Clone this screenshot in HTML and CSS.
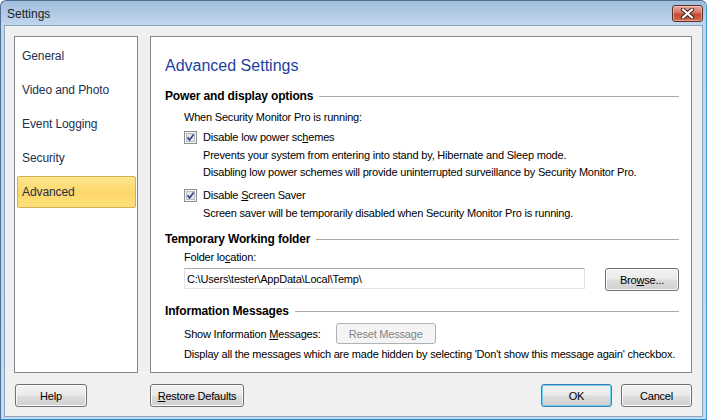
FILE: index.html
```html
<!DOCTYPE html>
<html lang="en">
<head>
<meta charset="UTF-8" />
<meta name="viewport" content="width=device-width, initial-scale=1" />
<title>Settings</title>
<link rel="stylesheet" href="styles.css">
</head>
<body>

<div class="window">
  <div class="titlebar">
    <span class="title">Settings</span>
    <button class="close" aria-label="Close">
      <svg width="15" height="11" viewBox="0 0 15 11">
        <path d="M3 1.5 L12 9.5 M12 1.5 L3 9.5" stroke="#4a2420" stroke-width="4.2" stroke-linecap="round" fill="none"/>
        <path d="M3 1.5 L12 9.5 M12 1.5 L3 9.5" stroke="#ffffff" stroke-width="2.2" stroke-linecap="round" fill="none"/>
      </svg>
    </button>
  </div>

  <div class="client">
    <div class="main">
      <ul class="nav">
        <li>General</li>
        <li>Video and Photo</li>
        <li>Event Logging</li>
        <li>Security</li>
        <li class="active">Advanced</li>
      </ul>

      <section class="panel">
        <h1>Advanced Settings</h1>

        <div class="group-title"><span>Power and display options</span></div>
        <div class="indent">
          <p class="line first">When Security Monitor Pro is running:</p>
          <label class="check">
            <svg width="13" height="13" viewBox="0 0 13 13">
              <rect x="0.5" y="0.5" width="12" height="12" fill="#f6f6f6" stroke="#8e8f8f"/>
              <rect x="2.5" y="2.5" width="8" height="8" fill="#e4e6ea" stroke="#b9bcc2"/>
              <path d="M3.6 6.4 L5.6 8.9 L9.6 3.4" stroke="#32488a" stroke-width="1.7" fill="none"/>
            </svg>
            <span>Disable low power sc<u>h</u>emes</span>
          </label>
          <div class="sub">
            <p class="line">Prevents your system from entering into stand by, Hibernate and Sleep mode.</p>
            <p class="line">Disabling low power schemes will provide uninterrupted surveillance by Security Monitor Pro.</p>
          </div>
          <label class="check second">
            <svg width="13" height="13" viewBox="0 0 13 13">
              <rect x="0.5" y="0.5" width="12" height="12" fill="#f6f6f6" stroke="#8e8f8f"/>
              <rect x="2.5" y="2.5" width="8" height="8" fill="#e4e6ea" stroke="#b9bcc2"/>
              <path d="M3.6 6.4 L5.6 8.9 L9.6 3.4" stroke="#32488a" stroke-width="1.7" fill="none"/>
            </svg>
            <span>Disable <u>S</u>creen Saver</span>
          </label>
          <div class="sub">
            <p class="line">Screen saver will be temporarily disabled when Security Monitor Pro is running.</p>
          </div>
        </div>

        <div class="group-title tight"><span>Temporary Working folder</span></div>
        <div class="indent">
          <p class="line small-gap">Folder lo<u>c</u>ation:</p>
          <div class="path-row">
            <input class="path" type="text" value="C:\Users\tester\AppData\Local\Temp\" readonly>
            <button class="btn browse">Bro<u>w</u>se...</button>
          </div>
        </div>

        <div class="group-title"><span>Information Messages</span></div>
        <div class="indent">
          <div class="show-row">
            <span>Show Information <u>M</u>essages:</span>
            <button class="btn disabled">Reset Message</button>
          </div>
          <p class="line small-gap">Display all the messages which are made hidden by selecting 'Don't show this message again' checkbox.</p>
        </div>
      </section>
    </div>

    <div class="footer">
      <div class="footer-left">
        <button class="btn help">Help</button>
      </div>
      <div class="footer-right">
        <button class="btn restore"><u>R</u>estore Defaults</button>
        <button class="btn ok">OK</button>
        <button class="btn cancel">Cancel</button>
      </div>
    </div>
  </div>
</div>

</body>
</html>
```

FILE: styles.css
```css
body {
  margin: 0;
  padding: 0;
  font-family: 'Liberation Sans', Arial, sans-serif;
  font-size: 11px;
  background: #ffffff;
}
.window {
  width: 707px;
  height: 420px;
  box-sizing: border-box;
  border: 1px solid #4f6f93;
  border-right-color: #3c9fd6;
  border-bottom-color: #2e8fc8;
  border-radius: 6px 6px 0 0;
  background: linear-gradient(#a2bedd, #c1d6ed 24px, #c4d9ef);
  padding: 0 3px 2px 3px;
  display: flex;
  flex-direction: column;
}
.titlebar {
  height: 24px;
  display: flex;
  align-items: flex-start;
}
.title {
  font-size: 12px;
  color: #1b1b1b;
  padding: 6px 0 0 3px;
}
.close {
  margin-left: auto;
  margin-top: 4px;
  width: 31px;
  height: 17px;
  padding: 0;
  border: 1px solid #5b2f2f;
  border-radius: 3px;
  background: linear-gradient(#e9a99b, #d47462 45%, #c04a33 55%, #d16b4e);
  box-shadow: inset 0 0 0 1px rgba(255, 220, 210, 0.5);
  display: flex;
  align-items: center;
  justify-content: center;
}
.client {
  flex: 1;
  background: #f0f0f0;
  border: 1px solid #8ca4c0;
  padding: 10px 10px 8px 9px;
  display: flex;
  flex-direction: column;
}
.main {
  display: flex;
  gap: 12px;
  height: 337px;
}
.nav {
  width: 124px;
  box-sizing: border-box;
  margin: 0;
  padding: 3px 1px 0 2px;
  list-style: none;
  background: #ffffff;
  border: 1px solid #828790;
}
.nav li {
  height: 32px;
  box-sizing: border-box;
  line-height: 30px;
  padding-left: 4px;
  margin-bottom: 2px;
  border: 1px solid transparent;
  border-radius: 2px;
  color: #1e3050;
  font-size: 12px;
  letter-spacing: -0.1px;
}
.nav li.active {
  background: linear-gradient(#fde58c, #fdd869 55%, #fde07c);
  border-color: #d5b04f;
}
.panel {
  flex: 1;
  box-sizing: border-box;
  background: #ffffff;
  border: 1px solid #828790;
  padding: 19px 12px 0 14px;
}
h1 {
  margin: 0;
  font-size: 16px;
  font-weight: normal;
  line-height: 20px;
  color: #1d3f9f;
}
.group-title {
  display: flex;
  align-items: center;
  margin-top: 12px;
  height: 16px;
  font-size: 12px;
  font-weight: bold;
  letter-spacing: -0.15px;
  color: #000000;
}
.group-title.tight {
  margin-top: 9px;
}
.group-title::after {
  content: "";
  flex: 1;
  height: 1px;
  background: #a9a9a9;
  margin-left: 6px;
}
.indent {
  padding-left: 19px;
}
.line {
  margin: 0;
  line-height: 17px;
  letter-spacing: -0.2px;
  white-space: nowrap;
}
.line.first {
  margin-top: 5px;
}
.line.small-gap {
  margin-top: 2px;
}
.check {
  display: flex;
  align-items: center;
  gap: 6px;
  height: 20px;
  margin-top: 1px;
  letter-spacing: -0.2px;
}
.check.second {
  margin-top: 4px;
}
.sub {
  padding-left: 19px;
}
.path-row {
  display: flex;
  justify-content: space-between;
  align-items: flex-start;
  margin-top: 2px;
  height: 23px;
}
.path {
  width: 401px;
  height: 21px;
  box-sizing: border-box;
  border: 1px solid #dfe3e8;
  border-top-color: #abadb3;
  padding: 0 2px;
  font-family: 'Liberation Sans', Arial, sans-serif;
  font-size: 11px;
  letter-spacing: -0.2px;
  color: #000000;
  background: #ffffff;
  outline: none;
}
.btn {
  height: 23px;
  box-sizing: border-box;
  padding: 0;
  border: 1px solid #707070;
  border-radius: 3px;
  background: linear-gradient(#f2f2f2, #ebebeb 48%, #dddddd 52%, #cfcfcf);
  box-shadow: inset 0 0 0 1px #fbfbfb;
  font-family: 'Liberation Sans', Arial, sans-serif;
  font-size: 11px;
  letter-spacing: -0.2px;
  color: #000000;
}
.browse {
  width: 74px;
}
.show-row {
  display: flex;
  align-items: center;
  margin-top: 4px;
  height: 21px;
  letter-spacing: -0.2px;
}
.show-row .btn {
  margin-left: 15px;
}
.btn.disabled {
  width: 100px;
  height: 21px;
  border-color: #adb2b5;
  background: #f4f4f4;
  box-shadow: none;
  color: #838383;
}
.footer {
  display: flex;
  gap: 12px;
  margin-top: 11px;
}
.footer-left {
  width: 124px;
}
.help {
  width: 72px;
  margin-left: 1px;
}
.footer-right {
  flex: 1;
  display: flex;
  gap: 9px;
}
.restore {
  width: 94px;
  margin-right: auto;
}
.ok,
.cancel {
  width: 71px;
}
.ok {
  border-color: #3c7fb1;
  box-shadow: inset 0 0 0 1px #6cd2f4;
}
```
